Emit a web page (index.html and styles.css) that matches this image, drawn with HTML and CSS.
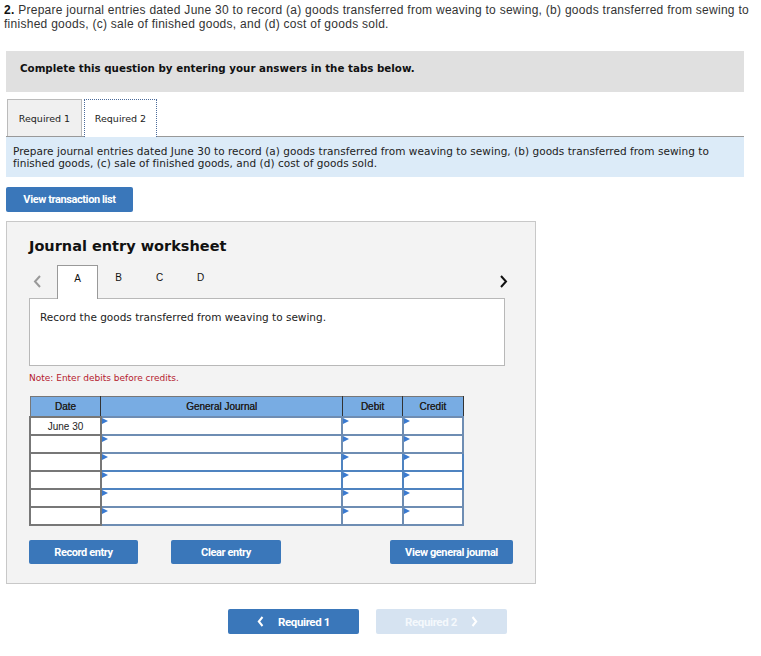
FILE: index.html
```html
<!DOCTYPE html>
<html lang="en">
<head>
  <meta charset="UTF-8">
  <title>Journal entry worksheet</title>
  <link rel="stylesheet" href="styles.css">
</head>

<body>

  <div class="page">
    <p class="question"><b>2.</b> Prepare journal entries dated June 30 to record (a) goods transferred from weaving to sewing, (b) goods transferred from sewing to finished goods, (c) sale of finished goods, and (d) cost of goods sold.</p>

    <div class="instructions">Complete this question by entering your answers in the tabs below.</div>

    <div class="req-tabs">
      <div class="req-tab">Required 1</div>
      <div class="req-tab active">Required 2</div>
    </div>

    <div class="req-info">Prepare journal entries dated June 30 to record (a) goods transferred from weaving to sewing, (b) goods transferred from sewing to finished goods, (c) sale of finished goods, and (d) cost of goods sold.</div>

    <button class="btn btn-list">View transaction list</button>

    <div class="worksheet">
      <h2>Journal entry worksheet</h2>

      <div class="entry-nav">
        <span class="arrow prev">
          <svg width="8" height="13" viewBox="0 0 8 13"><path d="M7 1 L2 6.5 L7 12" fill="none" stroke="#999" stroke-width="2"/></svg>
        </span>
        <span class="entry-tab active">A</span>
        <span class="entry-tab">B</span>
        <span class="entry-tab">C</span>
        <span class="entry-tab">D</span>
        <span class="arrow next">
          <svg width="8" height="13" viewBox="0 0 8 13"><path d="M1 1 L6 6.5 L1 12" fill="none" stroke="#111" stroke-width="2"/></svg>
        </span>
      </div>

      <div class="entry-desc">Record the goods transferred from weaving to sewing.</div>

      <p class="note">Note: Enter debits before credits.</p>

      <table class="journal">
        <tr>
          <th class="c-date">Date</th>
          <th class="c-gj">General Journal</th>
          <th class="c-num">Debit</th>
          <th class="c-num">Credit</th>
        </tr>
        <tr>
          <td class="date">June 30</td>
          <td class="in"><span class="flag"></span></td>
          <td class="in"><span class="flag"></span></td>
          <td class="in"><span class="flag"></span></td>
        </tr>
        <tr>
          <td class="date"></td>
          <td class="in"><span class="flag"></span></td>
          <td class="in"><span class="flag"></span></td>
          <td class="in"><span class="flag"></span></td>
        </tr>
        <tr>
          <td class="date"></td>
          <td class="in"><span class="flag"></span></td>
          <td class="in"><span class="flag"></span></td>
          <td class="in"><span class="flag"></span></td>
        </tr>
        <tr>
          <td class="date"></td>
          <td class="in"><span class="flag"></span></td>
          <td class="in"><span class="flag"></span></td>
          <td class="in"><span class="flag"></span></td>
        </tr>
        <tr>
          <td class="date"></td>
          <td class="in"><span class="flag"></span></td>
          <td class="in"><span class="flag"></span></td>
          <td class="in"><span class="flag"></span></td>
        </tr>
        <tr>
          <td class="date"></td>
          <td class="in"><span class="flag"></span></td>
          <td class="in"><span class="flag"></span></td>
          <td class="in"><span class="flag"></span></td>
        </tr>
      </table>

      <div class="actions">
        <button class="btn btn-record">Record entry</button>
        <button class="btn btn-clear">Clear entry</button>
        <button class="btn btn-view">View general journal</button>
      </div>
    </div>

    <div class="pager">
      <button class="btn btn-page">
        <svg width="7" height="11" viewBox="0 0 7 11"><path d="M5.5 1 L1.8 5.5 L5.5 10" fill="none" stroke="#fff" stroke-width="2"/></svg>
        Required 1
      </button>
      <button class="btn btn-page disabled">
        Required 2
        <svg width="7" height="11" viewBox="0 0 7 11"><path d="M1.5 1 L5.2 5.5 L1.5 10" fill="none" stroke="#fff" stroke-width="2"/></svg>
      </button>
    </div>
  </div>

</body>
</html>
```

FILE: styles.css
```css
body {
  margin: 0;
  background: #fff;
  color: #222;
  font-family: 'DejaVu Sans', Verdana, sans-serif;
}
.page {
  width: 738px;
  padding: 0 17px 20px 6px;
}
.question {
  margin: 3px -12px 0 -2px;
  font-family: 'Liberation Sans', Arial, sans-serif;
  font-size: 12px;
  letter-spacing: 0.27px;
  line-height: 14px;
  color: #333;
}
.question b {
  color: #111;
}
.instructions {
  margin-top: 20px;
  height: 41px;
  box-sizing: border-box;
  padding: 11px 14px 0;
  background-color: #e0e0e0;
  font-size: 10.3px;
  font-weight: bold;
  line-height: 12px;
  color: #111;
}
.req-tabs {
  display: flex;
  gap: 2px;
  margin-top: 7px;
  padding-left: 1px;
  border-bottom: 1px solid #999;
}
.req-tab {
  height: 37px;
  box-sizing: border-box;
  width: 75px;
  padding-top: 13px;
  text-align: center;
  font-size: 9.5px;
  background-color: #f0f0f0;
  border: 1px solid #bbb;
  border-bottom: none;
}
.req-tab.active {
  width: 73px;
  background-color: #fff;
  border: 1px dotted #4a6a9a;
  border-bottom: none;
  margin-bottom: -1px;
  height: 38px;
}
.req-info {
  height: 40px;
  box-sizing: border-box;
  padding: 8px 7px 0;
  background-color: #dcebf8;
  font-size: 10.5px;
  letter-spacing: 0.04px;
  line-height: 12px;
  color: #222;
}
.btn {
  display: inline-flex;
  align-items: center;
  justify-content: center;
  gap: 14px;
  border: none;
  border-radius: 2px;
  background-color: #3a77ba;
  color: #fff;
  font-family: Roboto, sans-serif;
  font-size: 11px;
  font-weight: bold;
  letter-spacing: -0.4px;
  cursor: pointer;
  padding: 0;
}
.btn-list {
  margin-top: 10px;
  width: 127px;
  height: 25px;
}
.worksheet {
  margin-top: 9px;
  width: 530px;
  box-sizing: border-box;
  padding: 14px 30px 19px 22px;
  background-color: #f3f3f3;
  border: 1px solid #c8c8c8;
}
.worksheet h2 {
  margin: 0;
  font-size: 14.5px;
  line-height: 20px;
  color: #111;
}
.entry-nav {
  display: flex;
  align-items: center;
  margin-top: 9px;
  height: 33px;
}
.arrow {
  display: flex;
  align-items: center;
}
.arrow.prev {
  width: 28px;
  padding-left: 4px;
  box-sizing: border-box;
}
.arrow.next {
  margin-left: auto;
  margin-right: -3px;
}
.entry-tab {
  width: 41px;
  height: 33px;
  box-sizing: border-box;
  padding-top: 7px;
  text-align: center;
  font-family: 'Liberation Sans', Arial, sans-serif;
  font-size: 10px;
  color: #111;
  align-self: stretch;
}
.entry-tab.active {
  width: 41px;
  background-color: #fff;
  border: 1px solid #999;
  border-bottom: none;
  height: 34px;
  margin-bottom: -1px;
  position: relative;
  z-index: 1;
}
.entry-desc {
  height: 68px;
  box-sizing: border-box;
  padding: 12px 10px 0;
  background-color: #fff;
  border: 1px solid #b8b8b8;
  font-size: 10.5px;
  line-height: 12px;
}
.note {
  margin: 6px 0 0;
  font-size: 9px;
  line-height: 12px;
  color: #b5202e;
}
.journal {
  margin-top: 12px;
  width: 435px;
  border-collapse: collapse;
  font-family: 'Liberation Sans', Arial, sans-serif;
  font-size: 10px;
}
.journal th {
  height: 19px;
  padding: 0;
  background-color: #78ace3;
  border: 1px solid #333;
  border-top-color: #777;
  font-weight: normal;
  color: #222;
  text-shadow: 0 0 0.3px #222;
}
.journal th:first-child {
  border-left-color: #777;
}
.c-date { width: 71px; }
.c-gj { width: 245px; }
.c-num { width: 60px; }
.journal td {
  height: 16px;
  padding: 0;
}
.journal td.date {
  border: 2px solid #777;
  background-color: #fff;
  text-align: center;
  color: #222;
}
.journal td.in {
  position: relative;
  border: 2px solid #6e8db3;
  background-color: #fff;
  box-shadow: inset 0 0 0 1px #fff;
}
.journal tr:nth-child(4) td.in,
.journal tr:nth-child(5) td.in {
  border-color: #4f83c0;
}
.flag {
  position: absolute;
  top: 0;
  left: 0;
  width: 0;
  height: 0;
  border-top: 3px solid transparent;
  border-bottom: 3px solid transparent;
  border-left: 6px solid #3a7ad0;
}
.actions {
  display: flex;
  margin-top: 14px;
}
.actions .btn {
  height: 24px;
}
.btn-record {
  width: 109px;
}
.btn-clear {
  width: 110px;
  margin-left: 33px;
}
.btn-view {
  width: 123px;
  margin-left: auto;
  margin-right: -8px;
}
.pager {
  display: flex;
  gap: 17px;
  margin-top: 25px;
  padding-left: 222px;
}
.btn-page {
  width: 131px;
  height: 25px;
  font-size: 11.5px;
}
.btn-page.disabled {
  background-color: #d6e3f1;
  color: #f4f8fc;
  cursor: default;
}
```
